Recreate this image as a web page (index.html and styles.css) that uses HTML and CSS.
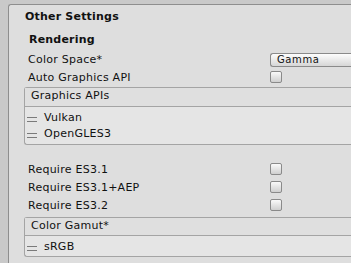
FILE: index.html
```html
<!DOCTYPE html>
<html lang="en">
<head>
  <meta charset="UTF-8">
  <meta name="viewport" content="width=device-width, initial-scale=1.0">
  <title>Other Settings</title>
  <link rel="stylesheet" href="styles.css">
</head>
<body>

  <div class="inspector">
    <div class="gutter"></div>

    <div class="panel">
      <h2 class="section-title">Other Settings</h2>
      <h3 class="group-title">Rendering</h3>

      <div class="row">
        <span class="label">Color Space*</span>
        <div class="dropdown">Gamma</div>
      </div>
      <div class="row">
        <span class="label">Auto Graphics API</span>
        <span class="checkbox"></span>
      </div>

      <div class="list-box">
        <div class="list-header">Graphics APIs</div>
        <ul class="list-items">
          <li><span class="handle"></span>Vulkan</li>
          <li><span class="handle"></span>OpenGLES3</li>
        </ul>
      </div>

      <div class="row first-after-list">
        <span class="label">Require ES3.1</span>
        <span class="checkbox"></span>
      </div>
      <div class="row">
        <span class="label">Require ES3.1+AEP</span>
        <span class="checkbox"></span>
      </div>
      <div class="row">
        <span class="label">Require ES3.2</span>
        <span class="checkbox"></span>
      </div>

      <div class="list-box gamut">
        <div class="list-header">Color Gamut*</div>
        <ul class="list-items">
          <li><span class="handle"></span>sRGB</li>
        </ul>
      </div>
    </div>
  </div>

</body>
</html>
```

FILE: styles.css
```css
body {
  margin: 0;
  font-family: 'DejaVu Sans', sans-serif;
  font-size: 11px;
  letter-spacing: 0.25px;
  color: #111;
  background-color: #c9c9c9;
  overflow: hidden;
}

.inspector {
  display: flex;
  height: 263px;
}

.gutter {
  width: 8px;
  flex-shrink: 0;
}

.panel {
  flex: 1;
  margin-top: 4px;
  border-left: 1px solid #8e8e8e;
  border-top: 1px solid #8e8e8e;
  border-top-left-radius: 3px;
  background-color: #dedede;
  padding: 4px 0 0 15px;
}

.section-title {
  margin: 0;
  font-size: 11px;
  line-height: 16px;
  font-weight: bold;
  letter-spacing: 0.2px;
  padding-left: 1px;
}

.group-title {
  margin: 7px 0 0;
  font-size: 11px;
  line-height: 16px;
  font-weight: bold;
  letter-spacing: 0.2px;
  padding-left: 5px;
}

.row {
  display: flex;
  align-items: flex-start;
  height: 18px;
  line-height: 18px;
  padding-left: 4px;
}

.row:nth-of-type(1) {
  margin-top: 3px;
}

.label {
  width: 242px;
  flex-shrink: 0;
  white-space: nowrap;
}

.dropdown {
  flex: 1;
  height: 12px;
  margin-top: 2px;
  border: 1px solid #8a8a8a;
  border-right: none;
  border-radius: 3px 0 0 3px;
  background: linear-gradient(#fdfdfd, #d6d6d6);
  font-size: 10px;
  line-height: 12px;
  letter-spacing: 0.6px;
  padding-left: 6px;
}

.checkbox {
  width: 10px;
  height: 10px;
  margin-top: 2px;
  border: 1px solid #8a8a8a;
  border-radius: 2px;
  background: linear-gradient(#fafafa, #cfcfcf);
}

.list-box {
  margin-top: 0;
  border: 1px solid #a4a4a4;
  border-right: none;
  border-radius: 3px 0 0 3px;
  background-color: #e5e5e5;
}

.list-header {
  line-height: 15px;
  padding: 0 0 3px 6px;
  border-bottom: 1px solid #a4a4a4;
  background-color: #dfdfdf;
}

.list-items {
  list-style: none;
  margin: 0;
  padding: 3px 0 2px;
}

.list-items li {
  display: flex;
  align-items: center;
  line-height: 16px;
}

.handle {
  width: 10px;
  height: 3px;
  margin: 3px 7px 0 2px;
  border-top: 1px solid #7a7a7a;
  border-bottom: 1px solid #7a7a7a;
}

.first-after-list {
  margin-top: 16px;
}

.gamut {
  margin-top: 2px;
}

.gamut .list-header {
  padding-bottom: 2px;
}

.gamut .list-items {
  padding-bottom: 1px;
}
```
